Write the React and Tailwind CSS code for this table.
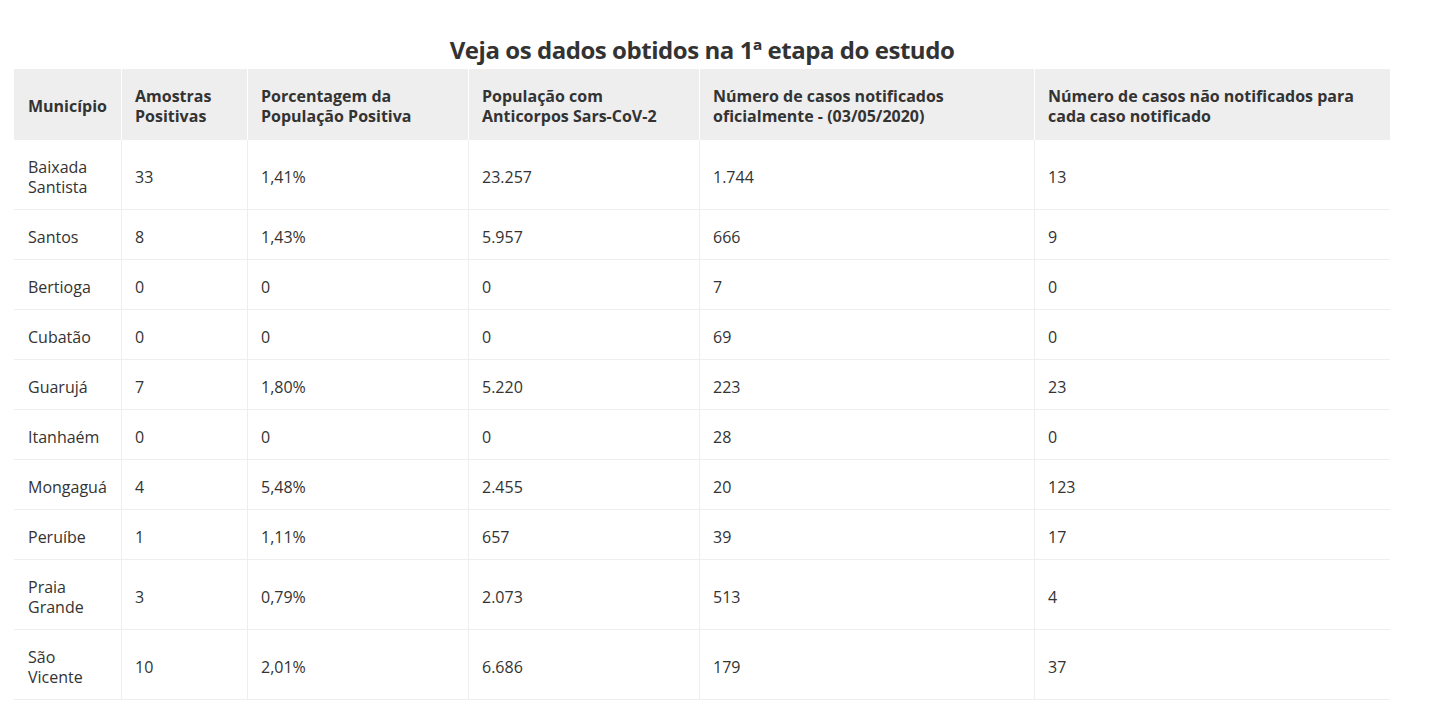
const rows = [
  ['Baixada Santista', '33', '1,41%', '23.257', '1.744', '13'],
  ['Santos', '8', '1,43%', '5.957', '666', '9'],
  ['Bertioga', '0', '0', '0', '7', '0'],
  ['Cubatão', '0', '0', '0', '69', '0'],
  ['Guarujá', '7', '1,80%', '5.220', '223', '23'],
  ['Itanhaém', '0', '0', '0', '28', '0'],
  ['Mongaguá', '4', '5,48%', '2.455', '20', '123'],
  ['Peruíbe', '1', '1,11%', '657', '39', '17'],
  ['Praia Grande', '3', '0,79%', '2.073', '513', '4'],
  ['São Vicente', '10', '2,01%', '6.686', '179', '37'],
];

const headers = [
  'Município',
  'Amostras Positivas',
  'Porcentagem da População Positiva',
  'População com Anticorpos Sars-CoV-2',
  'Número de casos notificados oficialmente - (03/05/2020)',
  'Número de casos não notificados para cada caso notificado',
];

export default function App() {
  return (
    <div className="min-h-screen bg-white text-[#333] font-['Open_Sans',sans-serif]">
      <div className="w-[1376px] ml-[14px] pt-[34px]">
        <h2 className="text-center text-[24px] leading-[32px] font-bold text-[#333] tracking-[-0.45px]">
          Veja os dados obtidos na 1ª etapa do estudo
        </h2>
        <table className="mt-[3px] w-[1376px] table-fixed border-separate border-spacing-0 text-[16px] leading-[20px]">
          <colgroup>
            <col className="w-[107px]" />
            <col className="w-[126px]" />
            <col className="w-[221px]" />
            <col className="w-[231px]" />
            <col className="w-[335px]" />
            <col className="w-[356px]" />
          </colgroup>
          <thead>
            <tr className="bg-[#eeeeee]">
              {headers.map((h, i) => (
                <th
                  key={h}
                  className={
                    'text-left align-middle font-bold text-[#333] pt-[17px] pb-[14px] pr-[20px] ' +
                    (i === 0 ? 'pl-[14px]' : 'pl-[13px] border-l border-white')
                  }
                >
                  {h}
                </th>
              ))}
            </tr>
          </thead>
          <tbody>
            {rows.map((r) => (
              <tr key={r[0]}>
                {r.map((c, i) => (
                  <td
                    key={i}
                    className={
                      'align-middle font-normal text-[#333] pt-[17px] pb-[12px] pr-3 border-b border-[#eeeeee] ' +
                      (i === 0 ? 'pl-[14px]' : 'pl-[13px] border-l')
                    }
                  >
                    {c}
                  </td>
                ))}
              </tr>
            ))}
          </tbody>
        </table>
      </div>
    </div>
  );
}
